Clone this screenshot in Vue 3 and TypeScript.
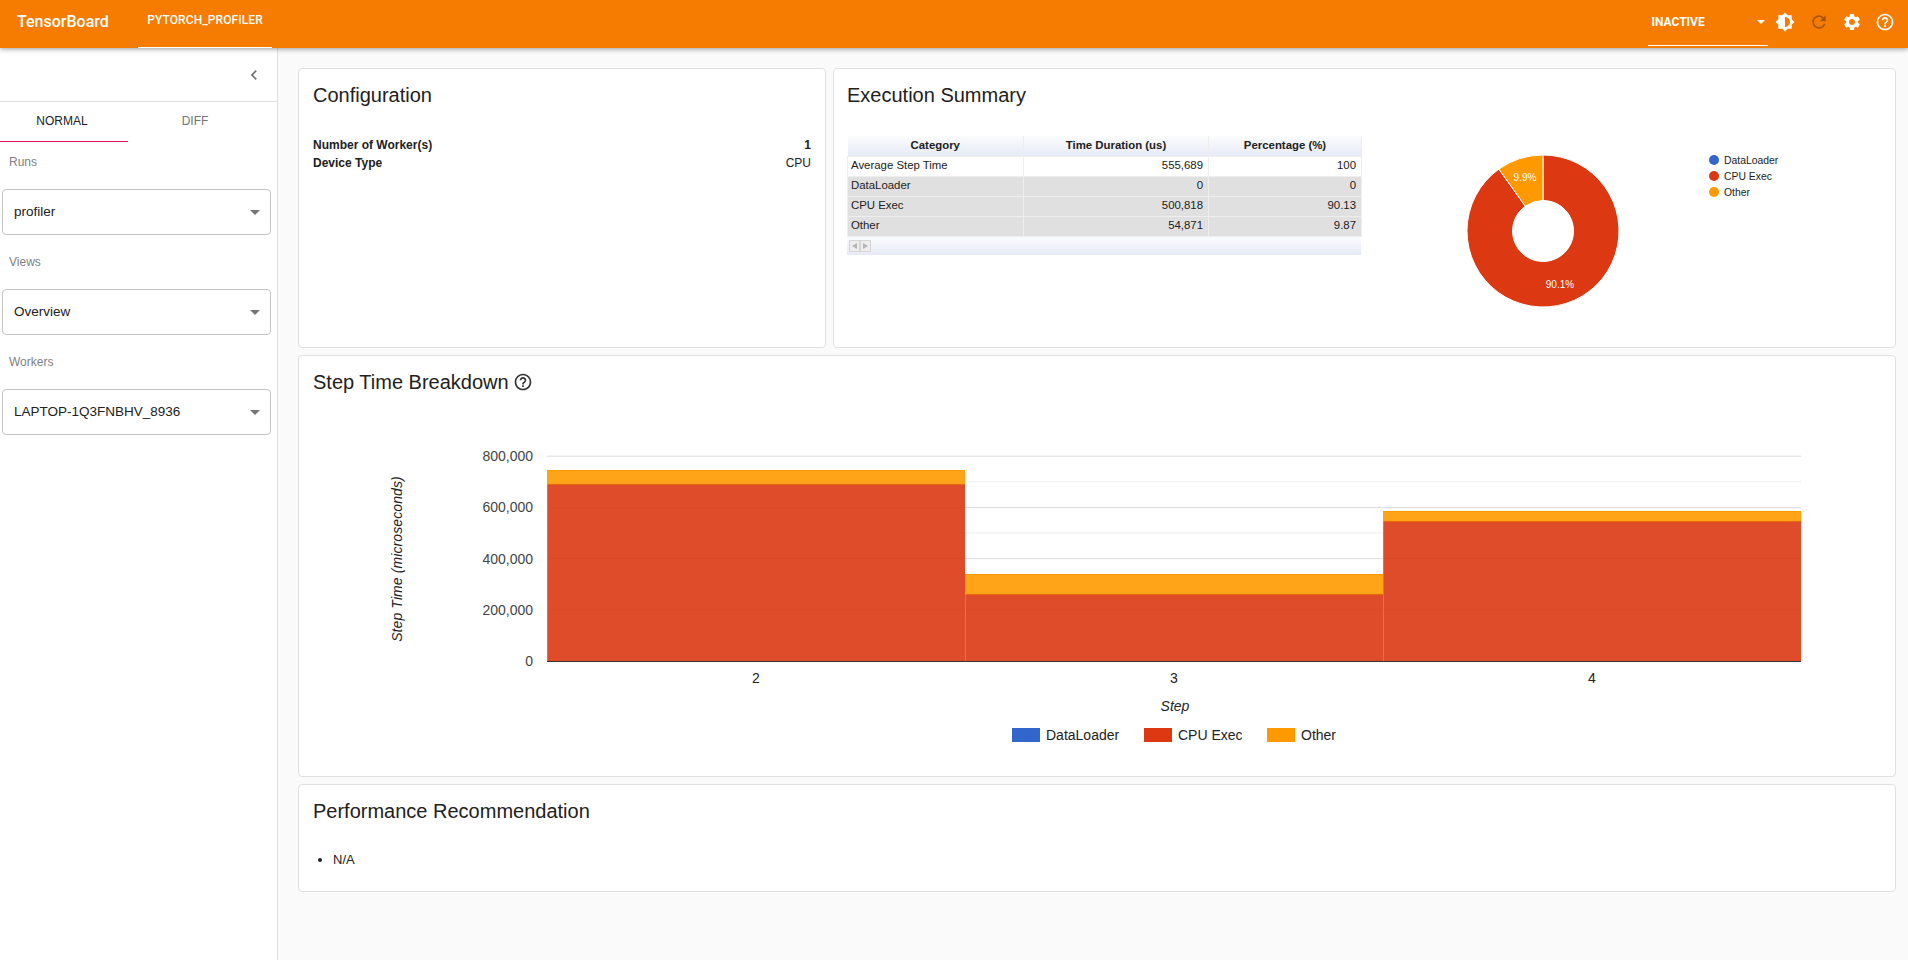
<script setup lang="ts">
interface SummaryRow {
  name: string
  time: string
  pct: string
  shaded: boolean
}

const summaryRows: SummaryRow[] = [
  { name: 'Average Step Time', time: '555,689', pct: '100', shaded: false },
  { name: 'DataLoader', time: '0', pct: '0', shaded: true },
  { name: 'CPU Exec', time: '500,818', pct: '90.13', shaded: true },
  { name: 'Other', time: '54,871', pct: '9.87', shaded: true }
]

const selects = [
  { label: 'Runs', value: 'profiler' },
  { label: 'Views', value: 'Overview' },
  { label: 'Workers', value: 'LAPTOP-1Q3FNBHV_8936' }
]

// chart coordinates are page pixels, the svg viewBox starts at the card corner
const plotLeft = 547
const plotBottom = 661
const barWidth = 418
const pxPer100k = 25.6

const gridLines = [1, 2, 3, 4, 5, 6, 7, 8].map((n) => ({
  y: plotBottom - n * pxPer100k,
  major: n % 2 === 0
}))
const yLabels = ['0', '200,000', '400,000', '600,000', '800,000'].map((text, i) => ({
  text,
  y: plotBottom - i * 2 * pxPer100k + 5
}))
const bars = [
  { step: '2', top: 470, split: 484 },
  { step: '3', top: 574, split: 594 },
  { step: '4', top: 511, split: 521 }
].map((b, i) => ({ ...b, x: plotLeft + i * barWidth }))

const legend = [
  { name: 'DataLoader', color: '#3366cc', x: 1012, pieY: 160 },
  { name: 'CPU Exec', color: '#dc3912', x: 1144, pieY: 176 },
  { name: 'Other', color: '#ff9900', x: 1267, pieY: 192 }
]
</script>

<template>
  <div class="page">
    <header class="topbar">
      <div class="logo">TensorBoard</div>
      <div class="plugin-tab">PYTORCH_PROFILER</div>
      <div class="spacer"></div>
      <div class="reload-select">
        <span>INACTIVE</span>
        <i class="caret"></i>
      </div>
      <button class="icon-btn">
        <svg viewBox="0 0 24 24"><path d="M20 15.31L23.31 12 20 8.69V4h-4.69L12 .69 8.69 4H4v4.69L.69 12 4 15.31V20h4.69L12 23.31 15.31 20H20v-4.69zM12 18V6c3.31 0 6 2.69 6 6s-2.69 6-6 6z" /></svg>
      </button>
      <button class="icon-btn disabled">
        <svg viewBox="0 0 24 24"><path d="M17.65 6.35C16.2 4.9 14.21 4 12 4c-4.42 0-7.99 3.58-7.99 8s3.57 8 7.99 8c3.73 0 6.84-2.55 7.73-6h-2.08c-.82 2.33-3.04 4-5.65 4-3.31 0-6-2.69-6-6s2.69-6 6-6c1.66 0 3.14.69 4.22 1.78L13 11h7V4l-2.35 2.35z" /></svg>
      </button>
      <button class="icon-btn">
        <svg viewBox="0 0 24 24"><path d="M19.14 12.94c.04-.3.06-.61.06-.94 0-.32-.02-.64-.07-.94l2.03-1.58c.18-.14.23-.41.12-.61l-1.92-3.32c-.12-.22-.37-.29-.59-.22l-2.39.96c-.5-.38-1.03-.7-1.62-.94l-.36-2.54c-.04-.24-.24-.41-.48-.41h-3.84c-.24 0-.43.17-.47.41l-.36 2.54c-.59.24-1.13.57-1.62.94l-2.39-.96c-.22-.08-.47 0-.59.22L2.74 8.87c-.12.21-.08.47.12.61l2.03 1.58c-.05.3-.09.63-.09.94s.02.64.07.94l-2.03 1.58c-.18.14-.23.41-.12.61l1.92 3.32c.12.22.37.29.59.22l2.39-.96c.5.38 1.03.7 1.62.94l.36 2.54c.05.24.24.41.48.41h3.84c.24 0 .44-.17.47-.41l.36-2.54c.59-.24 1.13-.56 1.62-.94l2.39.96c.22.08.47 0 .59-.22l1.92-3.32c.12-.22.07-.47-.12-.61l-2.01-1.58zM12 15.6c-1.98 0-3.6-1.62-3.6-3.6s1.62-3.6 3.6-3.6 3.6 1.62 3.6 3.6-1.62 3.6-3.6 3.6z" /></svg>
      </button>
      <button class="icon-btn">
        <svg viewBox="0 0 24 24"><path d="M11 18h2v-2h-2v2zm1-16C6.48 2 2 6.48 2 12s4.48 10 10 10 10-4.48 10-10S17.52 2 12 2zm0 18c-4.41 0-8-3.59-8-8s3.59-8 8-8 8 3.59 8 8-3.59 8-8 8zm0-14c-2.21 0-4 1.79-4 4h2c0-1.1.9-2 2-2s2 .9 2 2c0 2-3 1.75-3 5h2c0-2.25 3-2.5 3-5 0-2.21-1.79-4-4-4z" /></svg>
      </button>
    </header>

    <div class="body">
      <aside class="sidebar">
        <div class="collapse-row">
          <svg class="chevron" viewBox="0 0 24 24"><path d="M15.41 7.41L14 6l-6 6 6 6 1.41-1.41L10.83 12z" /></svg>
        </div>
        <div class="tabs">
          <div class="tab active">NORMAL</div>
          <div class="tab">DIFF</div>
        </div>
        <div class="controls">
          <div v-for="s in selects" :key="s.label" class="control">
            <div class="control-label">{{ s.label }}</div>
            <div class="select-box">
              <span class="select-value">{{ s.value }}</span>
              <i class="select-arrow"></i>
            </div>
          </div>
        </div>
      </aside>

      <main class="content">
        <div class="top-row">
          <section class="card config">
            <h2 class="card-title">Configuration</h2>
            <div class="config-rows">
              <div class="config-row"><b>Number of Worker(s)</b><b>1</b></div>
              <div class="config-row"><b>Device Type</b><span>CPU</span></div>
            </div>
          </section>

          <section class="card summary">
            <h2 class="card-title">Execution Summary</h2>
            <div class="summary-body">
              <div class="table-wrap">
                <table class="gv-table">
                  <colgroup>
                    <col style="width: 176px" />
                    <col style="width: 185px" />
                    <col style="width: 153px" />
                  </colgroup>
                  <thead>
                    <tr>
                      <th>Category</th>
                      <th>Time Duration (us)</th>
                      <th>Percentage (%)</th>
                    </tr>
                  </thead>
                  <tbody>
                    <tr v-for="r in summaryRows" :key="r.name" :class="{ shaded: r.shaded }">
                      <td>{{ r.name }}</td>
                      <td class="num">{{ r.time }}</td>
                      <td class="num">{{ r.pct }}</td>
                    </tr>
                  </tbody>
                </table>
                <div class="table-foot">
                  <span class="page-btn"><i class="tri-left"></i></span>
                  <span class="page-btn"><i class="tri-right"></i></span>
                </div>
              </div>
              <svg class="pie" width="520" height="212" viewBox="1361 126 520 212">
                <path
                  d="M1543 155 A76 76 0 1 1 1498.9 169.1 L1525.3 206.2 A30.5 30.5 0 1 0 1543 200.5 Z"
                  fill="#dc3912"
                  stroke="#fff"
                />
                <path
                  d="M1543 155 A76 76 0 0 0 1498.9 169.1 L1525.3 206.2 A30.5 30.5 0 0 1 1543 200.5 Z"
                  fill="#ff9900"
                  stroke="#fff"
                />
                <text x="1525" y="181" class="pie-label" text-anchor="middle">9.9%</text>
                <text x="1560" y="288" class="pie-label" text-anchor="middle">90.1%</text>
                <g v-for="l in legend" :key="l.name">
                  <circle cx="1714" :cy="l.pieY" r="5" :fill="l.color" />
                  <text x="1724" :y="l.pieY + 4" class="pie-legend">{{ l.name }}</text>
                </g>
              </svg>
            </div>
          </section>
        </div>

        <section class="card step">
          <h2 class="card-title">
            Step Time Breakdown
            <svg class="title-help" viewBox="0 0 24 24"><path d="M11 18h2v-2h-2v2zm1-16C6.48 2 2 6.48 2 12s4.48 10 10 10 10-4.48 10-10S17.52 2 12 2zm0 18c-4.41 0-8-3.59-8-8s3.59-8 8-8 8 3.59 8 8-3.59 8-8 8zm0-14c-2.21 0-4 1.79-4 4h2c0-1.1.9-2 2-2s2 .9 2 2c0 2-3 1.75-3 5h2c0-2.25 3-2.5 3-5 0-2.21-1.79-4-4-4z" /></svg>
          </h2>
          <svg class="step-chart" width="1596" height="370" viewBox="299 394 1596 370">
            <line
              v-for="g in gridLines"
              :key="g.y"
              x1="547"
              x2="1801"
              :y1="g.y"
              :y2="g.y"
              :stroke="g.major ? '#dcdcdc' : '#ececec'"
            />
            <g v-for="b in bars" :key="b.step">
              <rect :x="b.x" :y="b.top" :width="barWidth" :height="b.split - b.top" fill="#ff9900" fill-opacity="0.9" />
              <rect :x="b.x" :y="b.split" :width="barWidth" :height="plotBottom - b.split" fill="#dc3912" fill-opacity="0.9" />
              <line :x1="b.x" :x2="b.x + barWidth" :y1="b.top + 0.5" :y2="b.top + 0.5" stroke="#ff9900" />
              <line :x1="b.x" :x2="b.x + barWidth" :y1="b.split + 0.5" :y2="b.split + 0.5" stroke="#ec6508" />
              <line :x1="b.x + 0.5" :x2="b.x + 0.5" :y1="b.split" :y2="plotBottom" stroke="#fff" stroke-opacity="0.2" />
              <text :x="b.x + barWidth / 2" y="683" class="x-tick" text-anchor="middle">{{ b.step }}</text>
            </g>
            <line x1="547" x2="1801" y1="661.5" y2="661.5" stroke="#333" />
            <text v-for="t in yLabels" :key="t.text" x="533" :y="t.y" class="y-tick" text-anchor="end">{{ t.text }}</text>
            <text class="axis-title y-title" text-anchor="middle" transform="translate(402 559) rotate(-90)">Step Time (microseconds)</text>
            <text class="axis-title" x="1175" y="711" text-anchor="middle">Step</text>
            <g v-for="l in legend" :key="l.name">
              <rect :x="l.x" y="728" width="28" height="14" :fill="l.color" />
              <text :x="l.x + 34" y="740" class="legend-text">{{ l.name }}</text>
            </g>
          </svg>
        </section>

        <section class="card recommend">
          <h2 class="card-title">Performance Recommendation</h2>
          <ul class="rec-list">
            <li>N/A</li>
          </ul>
        </section>
      </main>
    </div>
  </div>
</template>

<style>
html,
body {
  margin: 0;
  background: #fafafa;
}
</style>

<style scoped>
.page {
  height: 960px;
  display: flex;
  flex-direction: column;
  overflow: hidden;
  font-family: 'Liberation Sans', Arial, sans-serif;
  color: #212121;
}

.topbar {
  height: 48px;
  flex: none;
  display: flex;
  align-items: center;
  padding: 0 6px 0 17px;
  background: #f57c00;
  color: #fff;
  font-family: Roboto, sans-serif;
  box-shadow: 0 1px 5px rgba(0, 0, 0, 0.4);
  position: relative;
  z-index: 2;
}

.logo {
  width: 121px;
  padding-bottom: 6px;
  font-size: 16px;
  font-weight: 500;
}

.plugin-tab {
  width: 134px;
  height: 48px;
  box-sizing: border-box;
  border-bottom: 1px solid #fff;
  text-align: center;
  line-height: 41px;
  font-size: 12px;
  font-weight: 500;
  letter-spacing: 0.1px;
}

.spacer {
  flex: 1;
}

.reload-select {
  width: 120px;
  height: 45px;
  margin-top: -2px;
  box-sizing: border-box;
  border-bottom: 1px solid #fff;
  padding: 0 3px 1px 3px;
  display: flex;
  align-items: center;
  justify-content: space-between;
  font-size: 12px;
  font-weight: 700;
}

.caret {
  width: 0;
  height: 0;
  border-left: 4px solid transparent;
  border-right: 4px solid transparent;
  border-top: 4px solid #fff;
}

.icon-btn {
  width: 33.4px;
  height: 48px;
  padding: 0 0 5px;
  border: 0;
  background: none;
  display: flex;
  align-items: center;
  justify-content: center;
}

.icon-btn svg {
  width: 20px;
  height: 20px;
  fill: #fff;
}

.icon-btn.disabled svg {
  fill: #a85500;
}

.body {
  flex: 1;
  display: flex;
  min-height: 0;
}

.sidebar {
  width: 278px;
  flex: none;
  box-sizing: border-box;
  background: #fff;
  border-right: 1px solid #e0e0e0;
}

.collapse-row {
  height: 54px;
  box-sizing: border-box;
  border-bottom: 1px solid #e0e0e0;
  display: flex;
  align-items: center;
  justify-content: flex-end;
  padding: 0 13px 0 0;
}

.chevron {
  width: 20px;
  height: 20px;
  fill: #757575;
}

.tabs {
  display: flex;
  height: 40px;
}

.tab {
  width: 128px;
  box-sizing: border-box;
  line-height: 39px;
  text-align: center;
  font-size: 12px;
  color: #757575;
}

.tab + .tab {
  width: 134px;
}

.tab.active {
  color: #212121;
  padding-right: 4px;
  border-bottom: 1px solid #e6125b;
}

.controls {
  padding: 13px 6px 0 2px;
  display: flex;
  flex-direction: column;
  gap: 20px;
}

.control-label {
  height: 14px;
  line-height: 14px;
  margin-bottom: 20px;
  padding-left: 7px;
  font-size: 12px;
  color: #7f7f7f;
}

.select-box {
  height: 46px;
  box-sizing: border-box;
  border: 1px solid #c4c4c4;
  border-radius: 4px;
  padding: 0 10px 0 11px;
  display: flex;
  align-items: center;
  justify-content: space-between;
  font-size: 13.5px;
  color: #212121;
}

.select-value {
  padding-bottom: 2px;
}

.select-arrow {
  width: 0;
  height: 0;
  border-left: 5px solid transparent;
  border-right: 5px solid transparent;
  border-top: 5px solid #757575;
}

.content {
  flex: 1;
  min-width: 0;
  padding: 20px 12px 0 20px;
  display: flex;
  flex-direction: column;
  gap: 7px;
}

.top-row {
  display: flex;
  gap: 7px;
  height: 280px;
}

.card {
  box-sizing: border-box;
  background: #fff;
  border: 1px solid #e0e0e0;
  border-radius: 4px;
  padding: 14px 14px 0;
}

.card-title {
  margin: 0;
  height: 24px;
  line-height: 24px;
  font-size: 20px;
  font-weight: 400;
  color: #212121;
  display: flex;
  align-items: center;
  gap: 4px;
}

.config {
  width: 528px;
  flex: none;
}

.config-rows {
  margin-top: 29px;
}

.config-row {
  height: 18px;
  line-height: 18px;
  font-size: 12px;
  display: flex;
  justify-content: space-between;
}

.summary {
  flex: 1;
  min-width: 0;
  padding-left: 13px;
}

.summary-body {
  display: flex;
  align-items: flex-start;
  margin-top: 19px;
}

.table-wrap {
  margin-top: 10px;
  width: 514px;
  flex: none;
}

.gv-table {
  width: 514px;
  table-layout: fixed;
  border-collapse: collapse;
  font-size: 11.4px;
  color: #212121;
}

.gv-table th {
  height: 20px;
  box-sizing: border-box;
  padding: 0 5px 2px;
  font-weight: 700;
  text-align: center;
  background: linear-gradient(#fbfcfe, #e6eaf5);
  border-right: 1px solid #eee;
}

.gv-table td {
  height: 20px;
  box-sizing: border-box;
  padding: 0 5px 2px 3px;
  border: 1px solid #eee;
}

.gv-table tr.shaded td {
  background: #e0e0e0;
}

.gv-table td.num {
  text-align: right;
  padding-right: 5px;
}

.table-foot {
  height: 18px;
  background: linear-gradient(#fbfcfe, #e6eaf5);
  display: flex;
  align-items: center;
  padding-left: 2px;
}

.page-btn {
  width: 11px;
  height: 12px;
  box-sizing: border-box;
  border: 1px solid #d6d6d6;
  background: #eee;
  display: flex;
  align-items: center;
  justify-content: center;
}

.tri-left,
.tri-right {
  width: 0;
  height: 0;
  border-top: 3px solid transparent;
  border-bottom: 3px solid transparent;
}

.tri-left {
  border-right: 5px solid #b5b5b5;
}

.tri-right {
  border-left: 5px solid #b5b5b5;
}

.pie {
  flex: none;
}

.pie-label {
  font-size: 10px;
  fill: #fff;
}

.pie-legend {
  font-size: 10.4px;
  fill: #222;
}

.step {
  height: 422px;
}

.title-help {
  width: 20px;
  height: 20px;
  fill: #333;
}

.step-chart {
  display: block;
  margin: 0 -14px;
  overflow: visible;
}

.y-tick {
  font-size: 14px;
  fill: #444;
}

.x-tick,
.legend-text {
  font-size: 14px;
  fill: #222;
}

.axis-title {
  font-size: 14px;
  font-style: italic;
  fill: #222;
}

.y-title {
  letter-spacing: 0.1px;
}

.recommend {
  height: 108px;
}

.rec-list {
  margin: 27px 0 0;
  padding-left: 20px;
  font-size: 13px;
  line-height: 20px;
}
</style>
